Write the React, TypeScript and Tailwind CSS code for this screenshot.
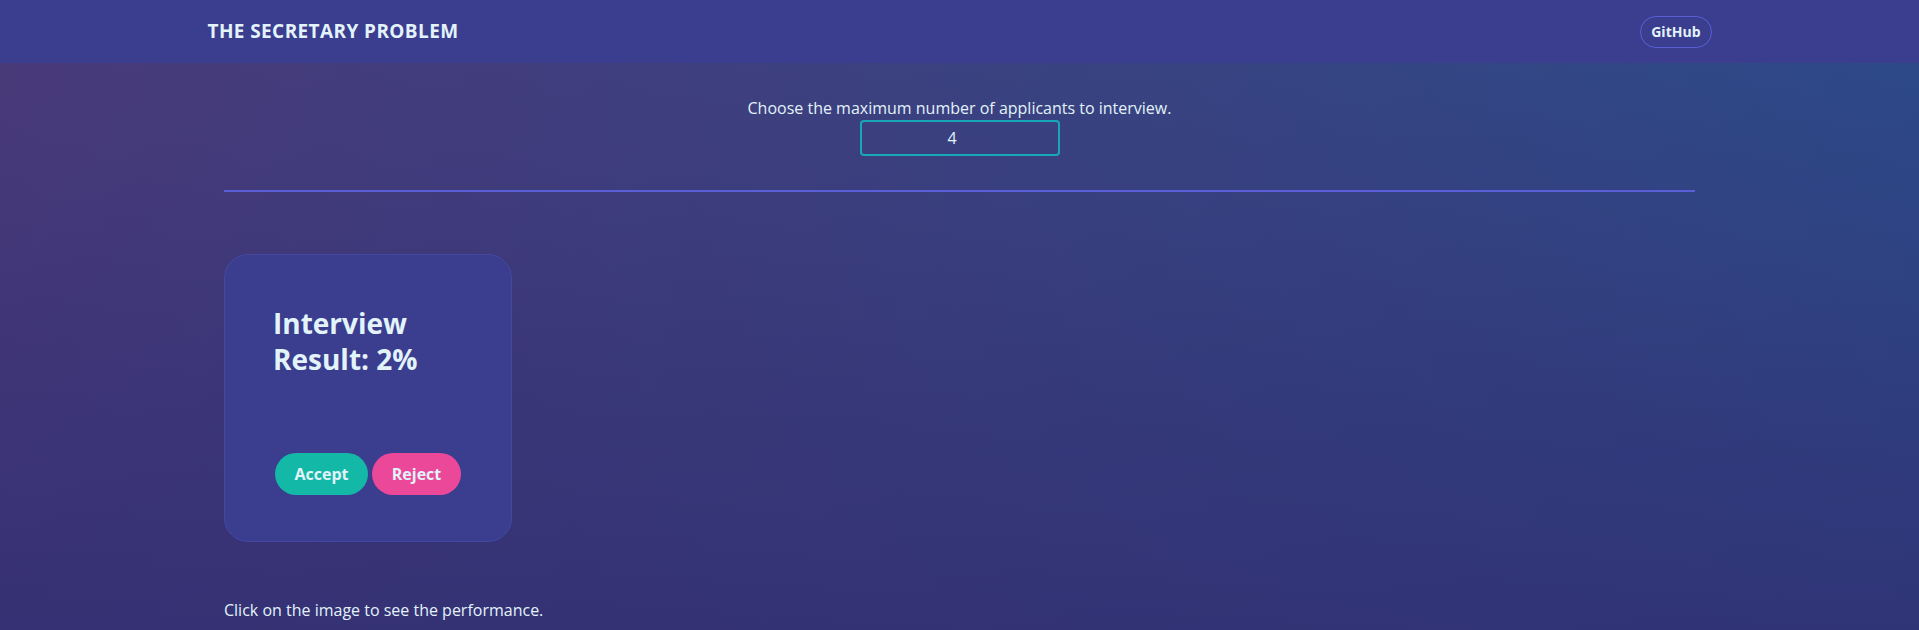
import { useState } from 'react'

export default function App() {
  const [count, setCount] = useState('4')

  return (
    <div className="min-h-screen text-[#e2f3fa] font-['Open_Sans',sans-serif] bg-[linear-gradient(to_bottom,rgba(49,48,118,0)_0%,rgba(48,46,114,0.8)_100%),linear-gradient(to_right,#4b3b7a,#2d4c8a)]">
      {/* Header */}
      <header className="h-[63px] bg-[#3b3d8f]">
        <div className="mx-auto flex h-full max-w-[1536px] items-center justify-between px-4">
          <span className="text-[19px] font-bold tracking-[0.4px]">THE SECRETARY PROBLEM</span>
          <a
            href="#"
            className="flex h-8 items-center rounded-full border border-[#5b5fd6] px-[10px] text-[14px] font-bold"
          >
            GitHub
          </a>
        </div>
      </header>

      <main className="mx-auto max-w-[1471px] pt-[33px]">
        {/* Applicant count */}
        <div className="flex flex-col items-center">
          <p className="text-[16px] leading-6">Choose the maximum number of applicants to interview.</p>
          <input
            type="number"
            value={count}
            onChange={(e) => setCount(e.target.value)}
            className="h-9 w-[200px] rounded border-2 border-[#17a7b9] bg-transparent text-center text-[16px] outline-none [appearance:textfield]"
          />
        </div>

        <div className="mt-[34px] h-[2px] bg-[#5a5fd8]" />

        {/* Interview card */}
        <div className="mt-[62px] flex h-[288px] w-[288px] flex-col rounded-[24px] border border-[#4548a0] bg-[#3b3d8f] px-[48px] pt-[50px] pb-[46px]">
          <h2 className="text-[28px] font-bold leading-[36px]">
            Interview
            <br />
            Result: 2%
          </h2>
          <div className="mt-auto flex gap-1 pl-[2px]">
            <button className="h-[42px] w-[93px] rounded-full bg-[#14b8a6] text-[16px] font-bold">Accept</button>
            <button className="h-[42px] w-[89px] rounded-full bg-[#ec4899] text-[16px] font-bold">Reject</button>
          </div>
        </div>

        <p className="mt-[56px] pb-4 text-[16px] leading-6">Click on the image to see the performance.</p>
      </main>
    </div>
  )
}
